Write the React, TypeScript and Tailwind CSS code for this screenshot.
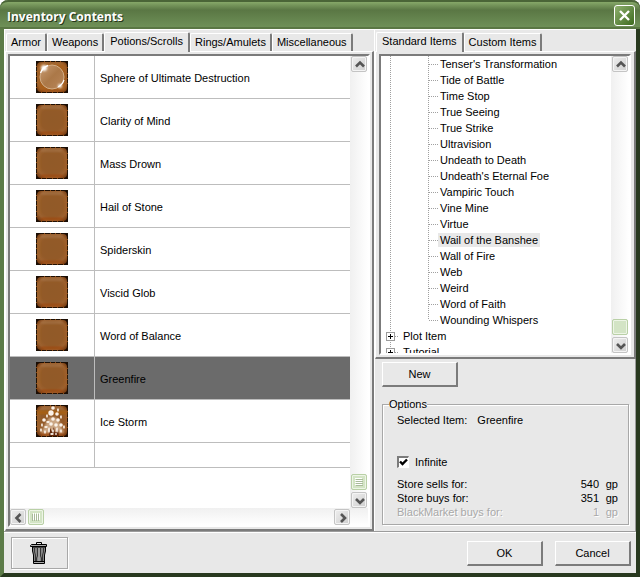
import { useState } from "react";
import type { ReactNode } from "react";

const spells = [
  "Sphere of Ultimate Destruction",
  "Clarity of Mind",
  "Mass Drown",
  "Hail of Stone",
  "Spiderskin",
  "Viscid Glob",
  "Word of Balance",
  "Greenfire",
  "Ice Storm",
];

const leaves = [
  "Tenser's Transformation",
  "Tide of Battle",
  "Time Stop",
  "True Seeing",
  "True Strike",
  "Ultravision",
  "Undeath to Death",
  "Undeath's Eternal Foe",
  "Vampiric Touch",
  "Vine Mine",
  "Virtue",
  "Wail of the Banshee",
  "Wall of Fire",
  "Web",
  "Weird",
  "Word of Faith",
  "Wounding Whispers",
];

const notches: [number, number][] = [
  [0, 5], [0, 10], [0, 15], [0, 21], [0, 26],
  [31, 6], [31, 12], [31, 17], [31, 22],
  [5, 31], [10, 31], [16, 31], [21, 31], [27, 31],
  [8, 0], [14, 0], [19, 0], [24, 0],
];

const flakes: [number, number, number, number][] = [
  [17, 3, 2, 2], [22, 5, 1, 2], [15, 8, 3, 3], [21, 9, 2, 2], [11, 11, 1, 2], [25, 12, 1, 2],
  [8, 15, 2, 2], [12, 17, 2, 1], [17, 14, 2, 2], [22, 15, 2, 2], [6, 20, 1, 2], [10, 22, 2, 1],
  [15, 19, 2, 2], [20, 20, 2, 2], [25, 20, 2, 2], [28, 22, 1, 2], [5, 25, 1, 2], [9, 27, 1, 2],
  [13, 25, 1, 3], [17, 26, 1, 2], [21, 25, 1, 3], [25, 26, 1, 2], [16, 29, 2, 1], [20, 29, 1, 1],
];

function SharedPaint() {
  return (
    <svg width="0" height="0" className="absolute" aria-hidden="true">
      <defs>
        <radialGradient id="leather" cx="50%" cy="48%" r="70%">
          <stop offset="0" stopColor="#915a28" />
          <stop offset="0.55" stopColor="#935a28" />
          <stop offset="0.75" stopColor="#9c6130" />
          <stop offset="1" stopColor="#6b2f06" />
        </radialGradient>
        <linearGradient id="orb" x1="0" y1="0" x2="1" y2="1">
          <stop offset="0" stopColor="#c99c74" />
          <stop offset="0.5" stopColor="#ab7848" />
          <stop offset="1" stopColor="#b98659" />
        </linearGradient>
        <filter id="soft">
          <feGaussianBlur stdDeviation="0.8" />
        </filter>
      </defs>
    </svg>
  );
}

function SpellIcon({ name }: { name: string }) {
  return (
    <svg width="32" height="32" viewBox="0 0 32 32" className="mx-auto block" aria-hidden="true">
      <rect width="32" height="32" fill="#1a0d04" />
      <rect x="1" y="1" width="30" height="30" rx="4" fill="url(#leather)" />
      <g filter="url(#soft)">
        <path d="M5 3.5H26" stroke="#a97b4f" strokeWidth="1.4" />
        <path d="M3 6V25" stroke="#a5682c" strokeWidth="1.2" />
        <path d="M5 29H27" stroke="#a03f06" strokeWidth="1.6" />
        <path d="M29.5 6V26" stroke="#a35c25" strokeWidth="1.2" />
      </g>
      {notches.map(([x, y]) => (
        <rect key={`${x}-${y}`} x={x} y={y} width="1" height="1" fill="#8d4c14" />
      ))}
      {name === "Sphere of Ultimate Destruction" && (
        <g>
          <rect x="3" y="3" width="26" height="26" fill="#a8601f" filter="url(#soft)" />
          <circle cx="16" cy="16" r="12" fill="url(#orb)" stroke="#d2ae88" strokeWidth="1" />
          <path d="M4.5 12A12 12 0 0 1 12 4.5" stroke="#fff" strokeWidth="1.4" fill="none" />
          <path d="M28 19A12 12 0 0 1 22 26" stroke="#fff" strokeWidth="1.2" fill="none" />
          <g filter="url(#soft)" fill="#fff">
            <circle cx="8" cy="7" r="3" />
            <circle cx="24" cy="25" r="2" />
          </g>
        </g>
      )}
      {name === "Ice Storm" && (
        <g>
          <path d="M1 6H31V9H1Z" fill="#a8600e" filter="url(#soft)" />
          <path d="M12 14Q16 10 22 14L28 28H5Z" fill="#e3c7ab" opacity="0.7" filter="url(#soft)" />
          <path d="M13 31L14 23L16 27L18 22L19 28L22 24L23 31Z" fill="#61270a" />
          {flakes.map(([x, y, rx, ry], i) => (
            <ellipse key={i} cx={x} cy={y} rx={rx * 0.9} ry={ry * 0.9} fill="#fbf3ea" />
          ))}
        </g>
      )}
    </svg>
  );
}

const arrows = {
  up: "M4 9.5L8 5.5L12 9.5",
  down: "M4 6L8 10L12 6",
  left: "M9.5 4L5.5 8L9.5 12",
  right: "M6 4L10 8L6 12",
};

function ScrollButton({ dir }: { dir: keyof typeof arrows }) {
  return (
    <button
      aria-label={`Scroll ${dir}`}
      className="grid size-4 shrink-0 place-items-center rounded-xs border border-[#c4c4c4] bg-linear-to-br from-[#eeeeee] to-[#cfcfcf] shadow-[inset_0_0_0_1px_#f4f4f4]"
    >
      <svg width="16" height="16" viewBox="0 0 16 16" className="shrink-0">
        <path d={arrows[dir]} fill="none" stroke="#555" strokeWidth="2.6" />
      </svg>
    </button>
  );
}

function Thumb({ grip }: { grip?: "rows" | "columns" }) {
  return (
    <div className="grid size-4 shrink-0 place-items-center rounded-xs border border-[#b9d0a6] bg-[#d3e4c5] shadow-[inset_0_0_0_1px_#edf5e6]">
      {grip && (
        <svg width="8" height="8" viewBox="0 0 8 8" className={grip === "columns" ? "rotate-90" : ""}>
          <path d="M0 .5H7M0 2.5H7M0 4.5H7M0 6.5H7" stroke="#fff" />
          <path d="M1 1.5H8M1 3.5H8M1 5.5H8M1 7.5H8" stroke="#a9bb9a" />
        </svg>
      )}
    </div>
  );
}

function VerticalBar({ grip }: { grip?: "rows" }) {
  return (
    <div className="flex w-[18px] shrink-0 flex-col items-center justify-between bg-linear-to-r from-[#f0f0f0] to-white">
      <ScrollButton dir="up" />
      <div className="flex flex-col gap-0.5">
        <Thumb grip={grip} />
        <ScrollButton dir="down" />
      </div>
    </div>
  );
}

function Tabs({ names, initial, label }: { names: string[]; initial: string; label: string }) {
  const [active, setActive] = useState(initial);
  return (
    <div role="tablist" aria-label={label} className="flex h-[21px] items-end pl-px">
      {names.map((name) => (
        <button
          key={name}
          role="tab"
          aria-selected={name === active}
          onClick={() => setActive(name)}
          className={
            name === active
              ? "z-10 -mb-px h-5 rounded-t-xs border-t border-r-2 border-l border-t-white border-r-[#7b7b7b] border-l-white bg-[#e8e8e8] px-[5px] pb-1 whitespace-nowrap"
              : "h-[18px] rounded-t-xs border-t border-r-2 border-l border-t-white border-r-[#7b7b7b] border-l-white bg-[#e8e8e8] px-1 pb-0.5 whitespace-nowrap"
          }
        >
          {name}
        </button>
      ))}
    </div>
  );
}

function PushButton({ children }: { children: ReactNode }) {
  return (
    <button className="h-[25px] w-[76px] border-t border-r-2 border-b-2 border-l border-t-white border-r-[#7b7b7b] border-b-[#7b7b7b] border-l-white bg-[#e8e8e8] text-center">
      {children}
    </button>
  );
}

function Expander() {
  return (
    <svg width="17" height="16" viewBox="0 0 17 16" className="shrink-0" aria-hidden="true">
      <path d="M4.5 0V16M9 8.5H13" stroke="#a0a0a0" strokeDasharray="1 1" />
      <rect x="0.5" y="4.5" width="8" height="8" fill="#fff" stroke="#9c9c9c" />
      <path d="M2 8.5H7M4.5 6V11" stroke="#000" />
    </svg>
  );
}

function ItemTree() {
  return (
    <ul role="tree" aria-label="Standard items" className="min-h-0 min-w-0 flex-1 basis-0 overflow-hidden pl-[5px]">
      {leaves.map((leaf, i) => (
        <li key={leaf} role="treeitem" className="flex h-4 items-center">
          <svg width="52" height="16" viewBox="0 0 52 16" className="shrink-0" aria-hidden="true">
            <path
              d={i === leaves.length - 1 ? "M4.5 0V16M42.5 0V8M43 8.5H52" : "M4.5 0V16M42.5 0V16M43 8.5H52"}
              stroke="#a0a0a0"
              strokeDasharray="1 1"
            />
          </svg>
          <span className={leaf === "Wail of the Banshee" ? "bg-[#e8e8e8] px-0.5" : "px-0.5"}>{leaf}</span>
        </li>
      ))}
      {["Plot Item", "Tutorial"].map((branch) => (
        <li key={branch} role="treeitem" aria-expanded="false" className="flex h-4 items-center">
          <Expander />
          {branch}
        </li>
      ))}
    </ul>
  );
}

function Price({ label, value, disabled }: { label: string; value: number; disabled?: boolean }) {
  return (
    <div className={disabled ? "flex text-[#a8a8a8] [text-shadow:1px_1px_0_white]" : "flex"}>
      <dt className="flex-1">{label}</dt>
      <dd>{value}</dd>
      <dd className="w-[19px] text-right">gp</dd>
    </div>
  );
}

function TrashIcon() {
  return (
    <svg width="18" height="23" viewBox="0 0 18 23" aria-hidden="true">
      <path d="M6.5 2V.5H11.5V2" fill="none" stroke="#000" />
      <path d="M1.5 2.5H16.5V4.5H.5V3.5Z" fill="#aaa" stroke="#000" />
      <path d="M2.5 5V9L3.5 13V21.5H14.5V13L15.5 9V5Z" fill="#858585" stroke="#000" />
      <path d="M4.5 6V10L5.5 13V20M7.5 6V14L6.5 16V20M10.5 6V14L11.5 16V20M13.5 6V10L12.5 13V20" stroke="#222" strokeWidth="0.8" fill="none" />
      <path d="M9 6V20" stroke="#b5b5b5" />
      <path d="M4 19.5H14" stroke="#000" />
      <path d="M4 20.5H14" stroke="#aaa" />
    </svg>
  );
}

export default function App() {
  const [selected, setSelected] = useState("Greenfire");
  const [infinite, setInfinite] = useState(true);

  return (
    <div className="flex h-screen min-h-[480px] flex-col rounded-t-lg border-r-4 border-b-4 border-l-4 border-r-[#28391f] border-b-[#28391f] border-l-[#5c7b48] bg-[#e8e8e8] font-['Liberation_Sans',Arial,sans-serif] text-[11px] leading-[14px] text-black">
      <SharedPaint />
      <header className="-mx-1 flex h-[29px] shrink-0 items-center justify-between rounded-t-lg border-t-2 border-[#4a6537] bg-linear-to-b from-[#86a869] via-[#5a7744] via-30% to-[#71935a] pr-[5px] pl-[7px] shadow-[inset_0_-2px_0_#5a7744]">
        <h1 className="pt-0.5 font-['Open_Sans',sans-serif] text-[12px] font-bold text-white [text-shadow:1px_1px_0_#26361c]">
          Inventory Contents
        </h1>
        <button
          aria-label="Close"
          className="grid size-[21px] place-items-center rounded-[3px] border border-white bg-linear-to-br from-[#8fb06f] to-[#3d6b1c]"
        >
          <svg width="13" height="13" viewBox="0 0 13 13">
            <path d="M2 2L11 11M11 2L2 11" stroke="#fff" strokeWidth="2.4" />
          </svg>
        </button>
      </header>

      <main className="flex min-h-0 flex-1">
        <section className="flex min-w-0 flex-1 flex-col border-t border-l border-white">
          <Tabs
            label="Inventory categories"
            names={["Armor", "Weapons", "Potions/Scrolls", "Rings/Amulets", "Miscellaneous"]}
            initial="Potions/Scrolls"
          />
          <div className="flex min-h-0 flex-1 flex-col border-t border-r-2 border-b-2 border-l border-t-white border-r-[#7b7b7b] border-b-[#7b7b7b] border-l-white p-0.5">
            <div className="flex min-h-0 flex-1 flex-col border-2 border-t-[#7b7b7b] border-r-white border-b-white border-l-[#7b7b7b] bg-white">
              <div className="flex min-h-0 flex-1">
                <div className="min-w-0 flex-1 overflow-hidden">
                  <table className="w-full border-separate border-spacing-0">
                    <tbody>
                      {spells.map((spell) => (
                        <tr
                          key={spell}
                          onClick={() => setSelected(spell)}
                          className={spell === selected ? "h-[43px] bg-[#6b6b6b]" : "h-[43px]"}
                        >
                          <td className="w-[85px] border-r border-b border-[#bdbdbd] p-0">
                            <SpellIcon name={spell} />
                          </td>
                          <td className="border-b border-[#bdbdbd] pt-0.5 pb-0 pl-[5px]">{spell}</td>
                        </tr>
                      ))}
                      <tr className="h-[25px]">
                        <td className="border-r border-b border-[#bdbdbd]" />
                        <td className="border-b border-[#bdbdbd]" />
                      </tr>
                    </tbody>
                  </table>
                </div>
                <VerticalBar grip="rows" />
              </div>
              <div className="flex h-[17px] shrink-0 items-center justify-between bg-linear-to-b from-[#f0f0f0] to-white pr-[18px]">
                <div className="flex gap-0.5">
                  <ScrollButton dir="left" />
                  <Thumb grip="columns" />
                </div>
                <ScrollButton dir="right" />
              </div>
            </div>
          </div>
        </section>

        <section className="flex w-[262px] shrink-0 flex-col border-t border-l border-white">
          <Tabs label="Item sources" names={["Standard Items", "Custom Items"]} initial="Standard Items" />
          <div className="flex min-h-0 flex-1 flex-col border-t border-r-2 border-b-2 border-l border-t-white border-r-[#7b7b7b] border-b-[#7b7b7b] border-l-white px-[3px] py-0.5">
            <div className="flex min-h-0 flex-1 border-2 border-t-[#7b7b7b] border-r-white border-b-white border-l-[#7b7b7b] bg-white">
              <ItemTree />
              <VerticalBar />
            </div>
          </div>
          <div className="flex flex-col gap-2.5 border-r border-[#9c9c9c] pt-[3px] pr-1.5 pb-1.5 pl-[7px]">
            <PushButton>New</PushButton>
            <fieldset className="h-32 border border-[#a8a8a8] px-[14px] shadow-[1px_1px_0_white,inset_1px_1px_0_white]">
              <legend className="-ml-2">Options</legend>
              <p className="flex gap-2.5 pt-0.5">
                <span>Selected Item:</span>
                <span>{selected}</span>
              </p>
              <label className="mt-7 flex items-center gap-1.5">
                <span className="grid">
                  <input
                    type="checkbox"
                    checked={infinite}
                    onChange={(e) => setInfinite(e.target.checked)}
                    className="peer col-start-1 row-start-1 size-3 appearance-none border-t-2 border-r border-b border-l-2 border-t-[#7b7b7b] border-r-white border-b-white border-l-[#7b7b7b] bg-white"
                  />
                  <svg
                    viewBox="0 0 12 12"
                    className="pointer-events-none invisible col-start-1 row-start-1 size-3 peer-checked:visible"
                  >
                    <path d="M3 5.5L5.5 8L10 3.5" stroke="#000" strokeWidth="2.4" fill="none" />
                  </svg>
                </span>
                Infinite
              </label>
              <dl className="-mr-1 mt-2">
                <Price label="Store sells for:" value={540} />
                <Price label="Store buys for:" value={351} />
                <Price label="BlackMarket buys for:" value={1} disabled />
              </dl>
            </fieldset>
          </div>
        </section>
      </main>

      <footer className="flex shrink-0 items-start justify-between border-t border-[#9c9c9c] pr-[5px] shadow-[inset_0_1px_0_white]">
        <button
          aria-label="Delete item"
          className="mt-[5px] ml-[7px] grid h-8 w-[57px] place-items-center border border-[#a8a8a8] pr-0.5 shadow-[inset_1px_1px_0_white,1px_1px_0_white]"
        >
          <TrashIcon />
        </button>
        <div className="flex gap-3 pt-[9px] pb-[7px]">
          <PushButton>OK</PushButton>
          <PushButton>Cancel</PushButton>
        </div>
      </footer>
    </div>
  );
}
